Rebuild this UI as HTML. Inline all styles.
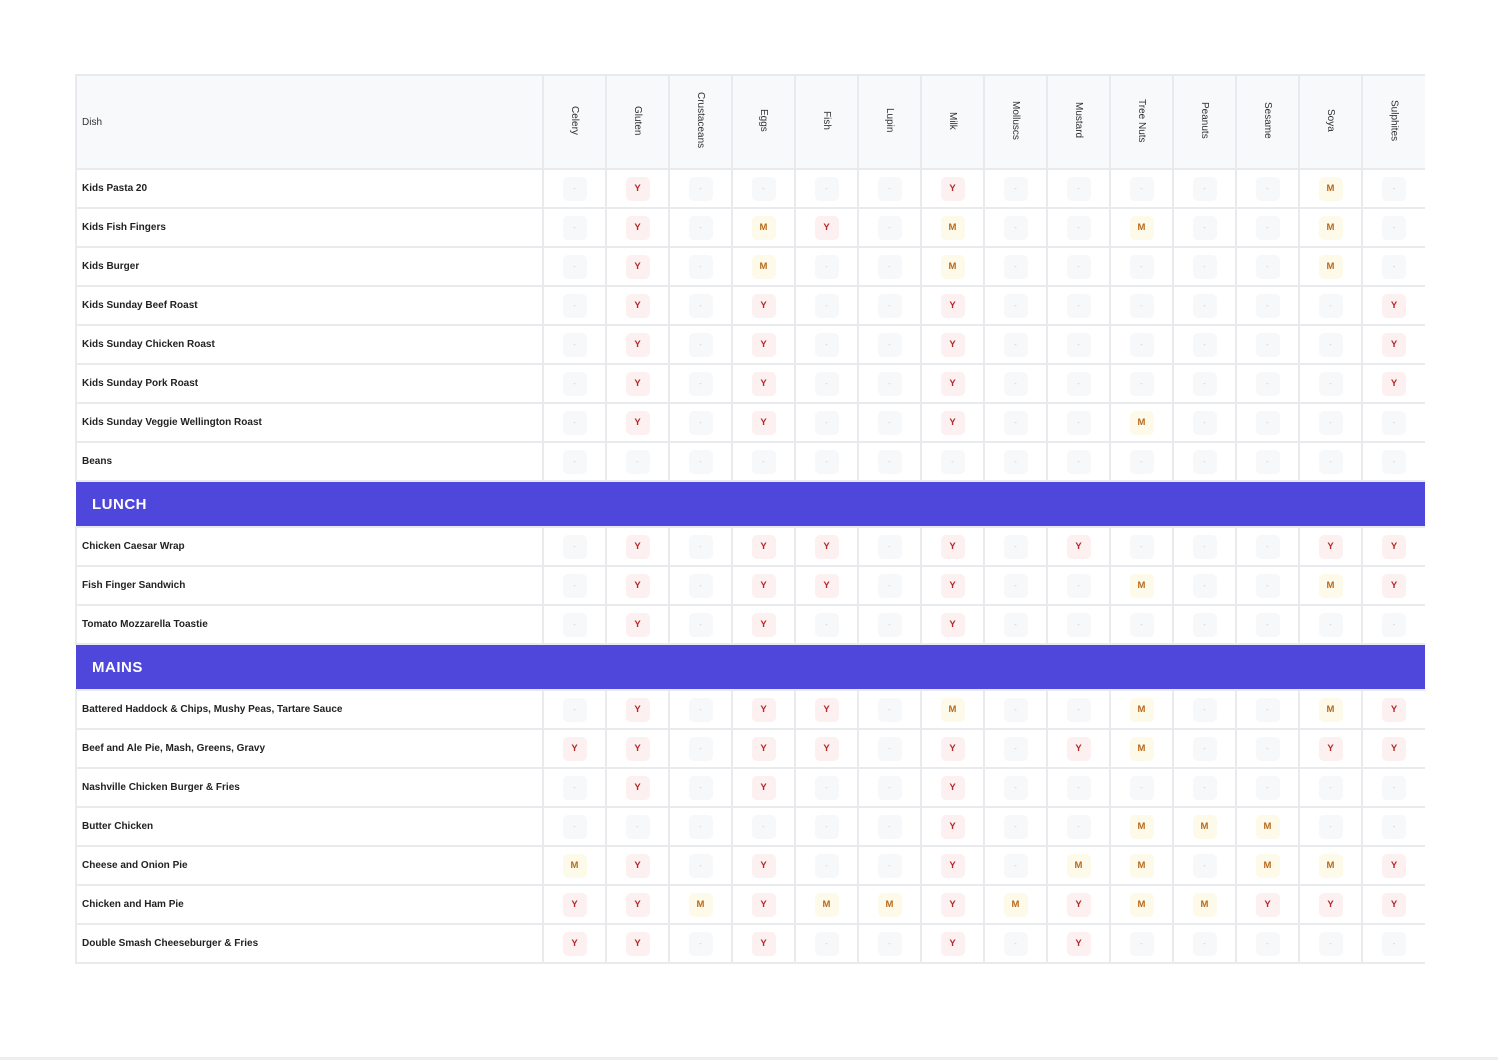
<!DOCTYPE html>
<html><head><meta charset="utf-8"><style>
body{margin:0;background:#fff;font-family:"Liberation Sans",sans-serif;width:1498px;height:1060px;position:relative;overflow:hidden}
table{position:absolute;left:75px;top:74px;width:1350px;border-collapse:collapse;table-layout:fixed}
td,th{border:2px solid #e9eaee;padding:0;text-align:center;height:37px}
tr>*:last-child{border-right:none}
th{background:#f8f9fb;height:92px;font-weight:normal;font-size:10px;color:#333}
th.d{text-align:left;padding-left:5px}
th span{display:inline-block;writing-mode:vertical-rl}
td.n{text-align:left;padding-left:5px;font-size:10px;font-weight:bold;color:#222}
i{font-style:normal;display:inline-block;width:24px;height:24px;line-height:24px;border-radius:5px;font-size:9.5px;font-weight:bold;vertical-align:middle}
i.y{background:#fcf0f0;color:#b42828}
i.m{background:#fefae9;color:#b86a1e}
i.n{background:#f7f8fa;color:#c8ccd2;font-weight:normal;font-size:8px}
tr.s td{background:#4f46dc;height:44px;text-align:left;padding-left:16px;color:#fff;font-weight:bold;font-size:15px;letter-spacing:.5px;border-left:none;border-right:none}
.foot{position:absolute;left:0;right:0;top:1057px;height:3px;background:#eeeeee}
</style></head><body>
<table>
<colgroup><col style="width:467px"><col span="14" style="width:63px"></colgroup>
<tr><th class="d">Dish</th><th><span>Celery</span></th><th><span>Gluten</span></th><th><span>Crustaceans</span></th><th><span>Eggs</span></th><th><span>Fish</span></th><th><span>Lupin</span></th><th><span>Milk</span></th><th><span>Molluscs</span></th><th><span>Mustard</span></th><th><span>Tree Nuts</span></th><th><span>Peanuts</span></th><th><span>Sesame</span></th><th><span>Soya</span></th><th><span>Sulphites</span></th></tr>
<tr><td class="n">Kids Pasta 20</td><td><i class="n">-</i></td><td><i class="y">Y</i></td><td><i class="n">-</i></td><td><i class="n">-</i></td><td><i class="n">-</i></td><td><i class="n">-</i></td><td><i class="y">Y</i></td><td><i class="n">-</i></td><td><i class="n">-</i></td><td><i class="n">-</i></td><td><i class="n">-</i></td><td><i class="n">-</i></td><td><i class="m">M</i></td><td><i class="n">-</i></td></tr>
<tr><td class="n">Kids Fish Fingers</td><td><i class="n">-</i></td><td><i class="y">Y</i></td><td><i class="n">-</i></td><td><i class="m">M</i></td><td><i class="y">Y</i></td><td><i class="n">-</i></td><td><i class="m">M</i></td><td><i class="n">-</i></td><td><i class="n">-</i></td><td><i class="m">M</i></td><td><i class="n">-</i></td><td><i class="n">-</i></td><td><i class="m">M</i></td><td><i class="n">-</i></td></tr>
<tr><td class="n">Kids Burger</td><td><i class="n">-</i></td><td><i class="y">Y</i></td><td><i class="n">-</i></td><td><i class="m">M</i></td><td><i class="n">-</i></td><td><i class="n">-</i></td><td><i class="m">M</i></td><td><i class="n">-</i></td><td><i class="n">-</i></td><td><i class="n">-</i></td><td><i class="n">-</i></td><td><i class="n">-</i></td><td><i class="m">M</i></td><td><i class="n">-</i></td></tr>
<tr><td class="n">Kids Sunday Beef Roast</td><td><i class="n">-</i></td><td><i class="y">Y</i></td><td><i class="n">-</i></td><td><i class="y">Y</i></td><td><i class="n">-</i></td><td><i class="n">-</i></td><td><i class="y">Y</i></td><td><i class="n">-</i></td><td><i class="n">-</i></td><td><i class="n">-</i></td><td><i class="n">-</i></td><td><i class="n">-</i></td><td><i class="n">-</i></td><td><i class="y">Y</i></td></tr>
<tr><td class="n">Kids Sunday Chicken Roast</td><td><i class="n">-</i></td><td><i class="y">Y</i></td><td><i class="n">-</i></td><td><i class="y">Y</i></td><td><i class="n">-</i></td><td><i class="n">-</i></td><td><i class="y">Y</i></td><td><i class="n">-</i></td><td><i class="n">-</i></td><td><i class="n">-</i></td><td><i class="n">-</i></td><td><i class="n">-</i></td><td><i class="n">-</i></td><td><i class="y">Y</i></td></tr>
<tr><td class="n">Kids Sunday Pork Roast</td><td><i class="n">-</i></td><td><i class="y">Y</i></td><td><i class="n">-</i></td><td><i class="y">Y</i></td><td><i class="n">-</i></td><td><i class="n">-</i></td><td><i class="y">Y</i></td><td><i class="n">-</i></td><td><i class="n">-</i></td><td><i class="n">-</i></td><td><i class="n">-</i></td><td><i class="n">-</i></td><td><i class="n">-</i></td><td><i class="y">Y</i></td></tr>
<tr><td class="n">Kids Sunday Veggie Wellington Roast</td><td><i class="n">-</i></td><td><i class="y">Y</i></td><td><i class="n">-</i></td><td><i class="y">Y</i></td><td><i class="n">-</i></td><td><i class="n">-</i></td><td><i class="y">Y</i></td><td><i class="n">-</i></td><td><i class="n">-</i></td><td><i class="m">M</i></td><td><i class="n">-</i></td><td><i class="n">-</i></td><td><i class="n">-</i></td><td><i class="n">-</i></td></tr>
<tr><td class="n">Beans</td><td><i class="n">-</i></td><td><i class="n">-</i></td><td><i class="n">-</i></td><td><i class="n">-</i></td><td><i class="n">-</i></td><td><i class="n">-</i></td><td><i class="n">-</i></td><td><i class="n">-</i></td><td><i class="n">-</i></td><td><i class="n">-</i></td><td><i class="n">-</i></td><td><i class="n">-</i></td><td><i class="n">-</i></td><td><i class="n">-</i></td></tr>
<tr class="s"><td colspan="15">LUNCH</td></tr>
<tr><td class="n">Chicken Caesar Wrap</td><td><i class="n">-</i></td><td><i class="y">Y</i></td><td><i class="n">-</i></td><td><i class="y">Y</i></td><td><i class="y">Y</i></td><td><i class="n">-</i></td><td><i class="y">Y</i></td><td><i class="n">-</i></td><td><i class="y">Y</i></td><td><i class="n">-</i></td><td><i class="n">-</i></td><td><i class="n">-</i></td><td><i class="y">Y</i></td><td><i class="y">Y</i></td></tr>
<tr><td class="n">Fish Finger Sandwich</td><td><i class="n">-</i></td><td><i class="y">Y</i></td><td><i class="n">-</i></td><td><i class="y">Y</i></td><td><i class="y">Y</i></td><td><i class="n">-</i></td><td><i class="y">Y</i></td><td><i class="n">-</i></td><td><i class="n">-</i></td><td><i class="m">M</i></td><td><i class="n">-</i></td><td><i class="n">-</i></td><td><i class="m">M</i></td><td><i class="y">Y</i></td></tr>
<tr><td class="n">Tomato Mozzarella Toastie</td><td><i class="n">-</i></td><td><i class="y">Y</i></td><td><i class="n">-</i></td><td><i class="y">Y</i></td><td><i class="n">-</i></td><td><i class="n">-</i></td><td><i class="y">Y</i></td><td><i class="n">-</i></td><td><i class="n">-</i></td><td><i class="n">-</i></td><td><i class="n">-</i></td><td><i class="n">-</i></td><td><i class="n">-</i></td><td><i class="n">-</i></td></tr>
<tr class="s"><td colspan="15">MAINS</td></tr>
<tr><td class="n">Battered Haddock &amp; Chips, Mushy Peas, Tartare Sauce</td><td><i class="n">-</i></td><td><i class="y">Y</i></td><td><i class="n">-</i></td><td><i class="y">Y</i></td><td><i class="y">Y</i></td><td><i class="n">-</i></td><td><i class="m">M</i></td><td><i class="n">-</i></td><td><i class="n">-</i></td><td><i class="m">M</i></td><td><i class="n">-</i></td><td><i class="n">-</i></td><td><i class="m">M</i></td><td><i class="y">Y</i></td></tr>
<tr><td class="n">Beef and Ale Pie, Mash, Greens, Gravy</td><td><i class="y">Y</i></td><td><i class="y">Y</i></td><td><i class="n">-</i></td><td><i class="y">Y</i></td><td><i class="y">Y</i></td><td><i class="n">-</i></td><td><i class="y">Y</i></td><td><i class="n">-</i></td><td><i class="y">Y</i></td><td><i class="m">M</i></td><td><i class="n">-</i></td><td><i class="n">-</i></td><td><i class="y">Y</i></td><td><i class="y">Y</i></td></tr>
<tr><td class="n">Nashville Chicken Burger &amp; Fries</td><td><i class="n">-</i></td><td><i class="y">Y</i></td><td><i class="n">-</i></td><td><i class="y">Y</i></td><td><i class="n">-</i></td><td><i class="n">-</i></td><td><i class="y">Y</i></td><td><i class="n">-</i></td><td><i class="n">-</i></td><td><i class="n">-</i></td><td><i class="n">-</i></td><td><i class="n">-</i></td><td><i class="n">-</i></td><td><i class="n">-</i></td></tr>
<tr><td class="n">Butter Chicken</td><td><i class="n">-</i></td><td><i class="n">-</i></td><td><i class="n">-</i></td><td><i class="n">-</i></td><td><i class="n">-</i></td><td><i class="n">-</i></td><td><i class="y">Y</i></td><td><i class="n">-</i></td><td><i class="n">-</i></td><td><i class="m">M</i></td><td><i class="m">M</i></td><td><i class="m">M</i></td><td><i class="n">-</i></td><td><i class="n">-</i></td></tr>
<tr><td class="n">Cheese and Onion Pie</td><td><i class="m">M</i></td><td><i class="y">Y</i></td><td><i class="n">-</i></td><td><i class="y">Y</i></td><td><i class="n">-</i></td><td><i class="n">-</i></td><td><i class="y">Y</i></td><td><i class="n">-</i></td><td><i class="m">M</i></td><td><i class="m">M</i></td><td><i class="n">-</i></td><td><i class="m">M</i></td><td><i class="m">M</i></td><td><i class="y">Y</i></td></tr>
<tr><td class="n">Chicken and Ham Pie</td><td><i class="y">Y</i></td><td><i class="y">Y</i></td><td><i class="m">M</i></td><td><i class="y">Y</i></td><td><i class="m">M</i></td><td><i class="m">M</i></td><td><i class="y">Y</i></td><td><i class="m">M</i></td><td><i class="y">Y</i></td><td><i class="m">M</i></td><td><i class="m">M</i></td><td><i class="y">Y</i></td><td><i class="y">Y</i></td><td><i class="y">Y</i></td></tr>
<tr><td class="n">Double Smash Cheeseburger &amp; Fries</td><td><i class="y">Y</i></td><td><i class="y">Y</i></td><td><i class="n">-</i></td><td><i class="y">Y</i></td><td><i class="n">-</i></td><td><i class="n">-</i></td><td><i class="y">Y</i></td><td><i class="n">-</i></td><td><i class="y">Y</i></td><td><i class="n">-</i></td><td><i class="n">-</i></td><td><i class="n">-</i></td><td><i class="n">-</i></td><td><i class="n">-</i></td></tr>
</table>
<div class="foot"></div>
</body></html>
